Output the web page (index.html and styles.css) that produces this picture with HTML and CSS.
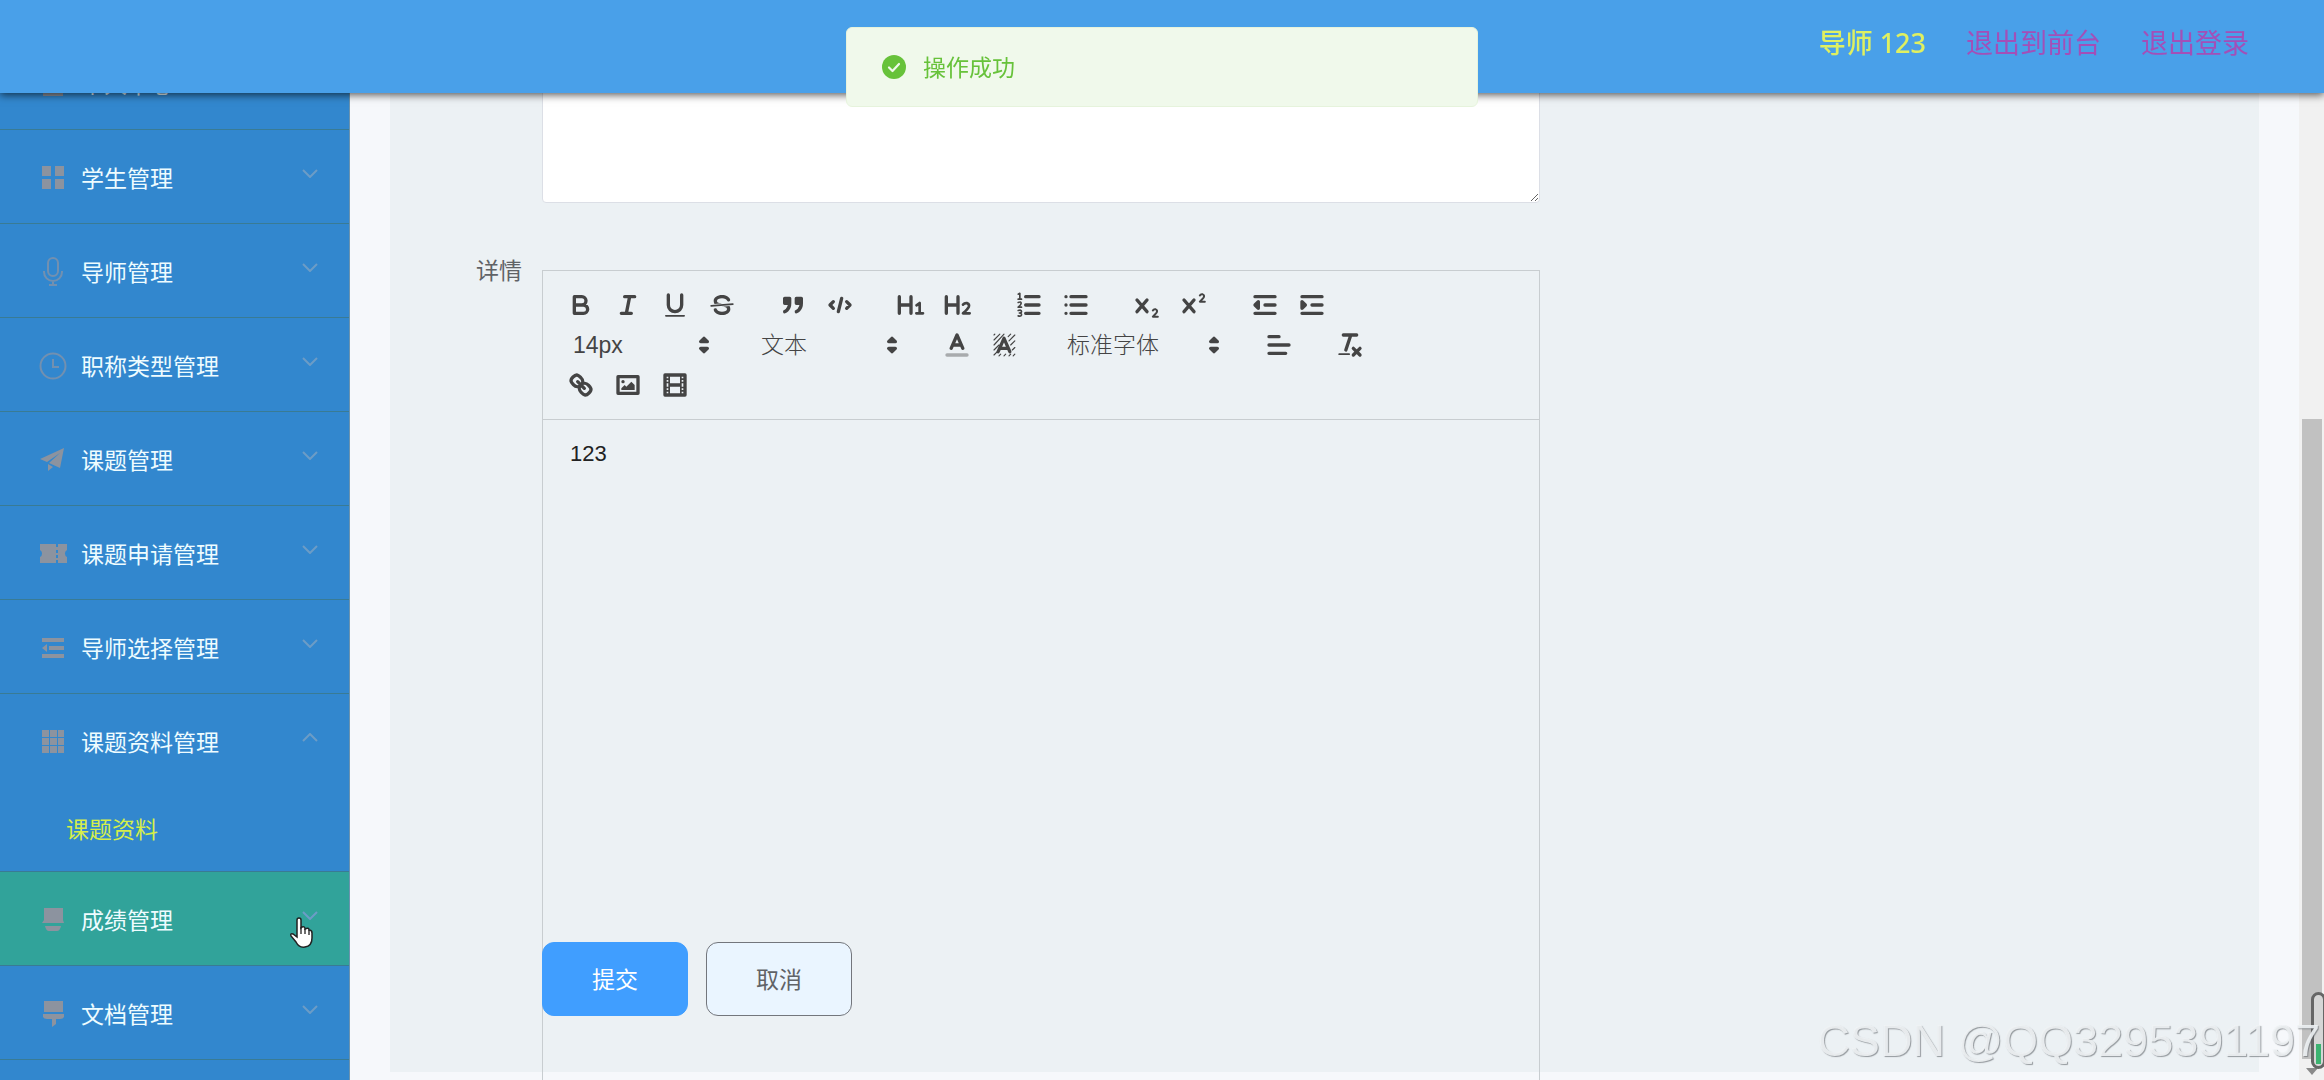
FILE: index.html
```html
<!DOCTYPE html>
<html lang="zh-CN">
<head>
<meta charset="utf-8">
<title>课题资料</title>
<link rel="stylesheet" href="styles.css">
</head>
<body>
<header class="topbar">
  <span class="user">导师 123</span>
  <a class="exit" href="#front">退出到前台</a>
  <a class="exit" href="#logout">退出登录</a>
</header>

<div class="toast" role="status">
  <svg class="toast-icon" viewBox="0 0 24 24"><circle cx="12" cy="12" r="12" fill="#67c23a"/><path d="M7 12.5l3.500 3.500 6.500-7" fill="none" stroke="#f0f9eb" stroke-width="2.200" stroke-linecap="round" stroke-linejoin="round"/></svg>
  <span>操作成功</span>
</div>

<div class="shell">
  <nav class="sidebar">
    <ul class="menu">
      <li><a class="item" href="#"><svg class="ico" viewBox="0 0 26 26"><path d="M3 6h20v19H3z"/></svg><span>个人中心</span></a></li>
      <li><a class="item" href="#"><svg class="ico" viewBox="0 0 26 26"><path d="M2 1h9v10H2zM15 1h9v10h-9zM2 14h9v10H2zM15 14h9v10h-9z"/></svg><span>学生管理</span><svg class="chev" viewBox="0 0 16 9"><path d="M1 1l7 7 7-7"/></svg></a></li>
      <li><a class="item" href="#"><svg class="ico line" viewBox="0 0 26 26"><rect x="8" y="-1" width="10" height="18" rx="5"/><path d="M4 12v1a9 9 0 0 0 18 0v-1M13 22v4M9 26h8"/></svg><span>导师管理</span><svg class="chev" viewBox="0 0 16 9"><path d="M1 1l7 7 7-7"/></svg></a></li>
      <li><a class="item" href="#"><svg class="ico line" viewBox="0 0 26 26"><circle cx="13" cy="13" r="12.500"/><path d="M13 6v8h6"/></svg><span>职称类型管理</span><svg class="chev" viewBox="0 0 16 9"><path d="M1 1l7 7 7-7"/></svg></a></li>
      <li><a class="item" href="#"><svg class="ico" viewBox="0 0 26 26"><path d="M24 1L0 12l7 3L20 6 9 16l11 5zM8 17v7l5-4z"/></svg><span>课题管理</span><svg class="chev" viewBox="0 0 16 9"><path d="M1 1l7 7 7-7"/></svg></a></li>
      <li><a class="item" href="#"><svg class="ico" viewBox="0 0 26 26"><path d="M0 3h16v3h2V3h9v6a4 4 0 0 0 0 7v6h-9v-3h-2v3H0v-6a4 4 0 0 0 0-7zM16 9v3h2V9zM16 14v3h2v-3z" fill-rule="evenodd"/></svg><span>课题申请管理</span><svg class="chev" viewBox="0 0 16 9"><path d="M1 1l7 7 7-7"/></svg></a></li>
      <li><a class="item" href="#"><svg class="ico" viewBox="0 0 26 26"><path d="M2 3h22v4H2zM9 11h15v4H9zM2 19h22v4H2zM7 9v8l-5-4z"/></svg><span>导师选择管理</span><svg class="chev" viewBox="0 0 16 9"><path d="M1 1l7 7 7-7"/></svg></a></li>
      <li>
        <a class="item" href="#"><svg class="ico" viewBox="0 0 26 26"><path d="M2 1h7v7H2zM10 1h7v7h-7zM18 1h6v7h-6zM2 9h7v7H2zM10 9h7v7h-7zM18 9h6v7h-6zM2 17h7v7H2zM10 17h7v7h-7zM18 17h6v7h-6z"/></svg><span>课题资料管理</span><svg class="chev" viewBox="0 0 16 9"><path d="M1 8l7-7 7 7"/></svg></a>
        <a class="subitem" href="#">课题资料</a>
      </li>
      <li class="hover"><a class="item" href="#"><svg class="ico" viewBox="0 0 26 26"><path d="M4 1h19v12l1 3H2l2-3zM5 19h16q-1 5-4 5H9q-3 0-4-5z"/></svg><span>成绩管理</span><svg class="chev" viewBox="0 0 16 9"><path d="M1 1l7 7 7-7"/></svg></a>
        <svg class="pointer" viewBox="0 0 24 30"><path d="M8 2a2 2 0 0 1 4 0v8l1-1q3-1 3 2 4-2 4 1 3 0 3 3v5q0 8-7 9-6 1-9-5L2 18q-1-3 2-2l4 3z" fill="#fff" stroke="#222" stroke-width="1.500"/><path d="M12 9v7M16 11v5M20 12v5" stroke="#222" stroke-width="1.300"/></svg></li>
      <li><a class="item" href="#"><svg class="ico" viewBox="0 0 26 26"><path d="M4 0h19v11H4zM3 13h21v3q-1 2-4 2h-4v5l-4 3v-8H7q-3 0-4-2z"/></svg><span>文档管理</span><svg class="chev" viewBox="0 0 16 9"><path d="M1 1l7 7 7-7"/></svg></a></li>
      <li><a class="item" href="#"></a></li>
    </ul>
  </nav>

  <main class="main">
    <form class="card">
      <div class="row">
        <label class="label" for="intro"></label>
        <textarea class="textarea" id="intro"></textarea>
      </div>
      <div class="row editor-row">
        <span class="label" id="detail-label">详情</span>
        <div class="editor">
          <div class="toolbar">
            <div class="tools">
              <div class="group">
                <button type="button" class="tool" aria-label="加粗"><svg viewBox="0 0 18 18"><path d="M5 4h4.500a2.500 2.500 0 0 1 0 5H5zM5 9h5.500a2.500 2.500 0 0 1 0 5H5z"/></svg></button>
                <button type="button" class="tool" aria-label="斜体"><svg viewBox="0 0 18 18"><path d="M7 4h6M5 14h6M8 14l2-10"/></svg></button>
                <button type="button" class="tool" aria-label="下划线"><svg viewBox="0 0 18 18"><path d="M5 3v6a4 4 0 0 0 8 0V3"/><rect class="fill" x="3" y="15" width="12" height="1" rx=".5"/></svg></button>
                <button type="button" class="tool" aria-label="删除线"><svg viewBox="0 0 18 18"><path class="thin" d="M15.500 8.500l-13 1"/><path class="fill" d="M9 8C6.500 7.800 6 7.500 6 6.500 6 5.800 7.300 5 9 5c1.600 0 2.800.7 3 1.300a1 1 0 0 0 1.900-.6C13.400 4.100 11.400 3 9 3 6.200 3 4 4.500 4 6.500a3.200 3.200 0 0 0 .5 1.840zM9 10c2.500.2 3 .5 3 1.500 0 .7-1.300 1.500-3 1.500-1.600 0-2.800-.7-3-1.300a1 1 0 1 0-1.900.6C4.600 13.900 6.600 15 9 15c2.800 0 5-1.500 5-3.500a3.200 3.200 0 0 0-.5-1.840z"/></svg></button>
              </div>
              <div class="group">
                <button type="button" class="tool" aria-label="引用"><svg viewBox="0 0 18 18"><path class="both" d="M4 5h3v3H4zM11 5h3v3h-3zM7 8c0 4-3 5-3 5M14 8c0 4-3 5-3 5"/></svg></button>
                <button type="button" class="tool" aria-label="代码"><svg viewBox="0 0 18 18"><path d="M5 7L3 9l2 2M13 7l2 2-2 2M10 5L8 13"/></svg></button>
              </div>
              <div class="group">
                <button type="button" class="tool" aria-label="标题 1"><svg viewBox="0 0 18 18"><path d="M2 4v10M9 4v10M2 9h7"/><path class="mid" d="M12.300 9.200l1.900-1.400V14M12.200 14h4"/></svg></button>
                <button type="button" class="tool" aria-label="标题 2"><svg viewBox="0 0 18 18"><path d="M2 4v10M9 4v10M2 9h7"/><path class="mid" d="M12 8.800q1-1.200 2.500-.9 1.500.6 1 2.100-.5 1.200-3.500 4h4"/></svg></button>
              </div>
              <div class="group">
                <button type="button" class="tool" aria-label="有序列表"><svg viewBox="0 0 18 18"><path d="M7 4h8M7 9h8M7 14h8"/><path class="thin" d="M2.500 2.500l1-.5v3M2.500 5.500h2M2.500 7.500q1.800-.8 1.800.5 0 1-1.800 2.300h2M2.500 12.300q2-.6 2 .6 0 .9-1.300.9 1.500.2 1.300 1.200-.3 1-2 .5"/></svg></button>
                <button type="button" class="tool" aria-label="无序列表"><svg viewBox="0 0 18 18"><path d="M6 4h9M6 9h9M6 14h9M3 4h0M3 9h0M3 14h0"/></svg></button>
              </div>
              <div class="group">
                <button type="button" class="tool" aria-label="下标"><svg viewBox="0 0 18 18"><path d="M3 6l6 7M9 6l-6 7"/><path class="sub" d="M12.500 12.300q.6-1 1.700-.7 1.300.5.6 1.900-.5.8-2.300 2.500h3"/></svg></button>
                <button type="button" class="tool" aria-label="上标"><svg viewBox="0 0 18 18"><path d="M3 6l6 7M9 6l-6 7"/><path class="sub" d="M12.500 3.300q.6-1 1.700-.7 1.300.5.6 1.900-.5.8-2.300 2.500h3"/></svg></button>
              </div>
              <div class="group">
                <button type="button" class="tool" aria-label="减少缩进"><svg viewBox="0 0 18 18"><path d="M3 4h12M3 14h12M9 9h6"/><path class="both" d="M5 7v4L3 9z"/></svg></button>
                <button type="button" class="tool" aria-label="增加缩进"><svg viewBox="0 0 18 18"><path d="M3 4h12M3 14h12M9 9h6"/><path class="both" d="M3 7v4l2-2z"/></svg></button>
              </div>
            </div>
            <div class="tools">
              <div class="picker"><select aria-label="字号"><option>14px</option></select><svg viewBox="0 0 18 18"><path class="both" d="M7 11h4l-2 2zM7 7h4L9 5z"/></svg></div>
              <div class="picker"><select aria-label="段落格式"><option>文本</option></select><svg viewBox="0 0 18 18"><path class="both" d="M7 11h4l-2 2zM7 7h4L9 5z"/></svg></div>
              <div class="group">
                <button type="button" class="tool" aria-label="文字颜色"><svg viewBox="0 0 18 18"><path class="faint" d="M3 15h12"/><path d="M5.500 11L9 3l3.500 8M11.600 9H6.400"/></svg></button>
                <button type="button" class="tool" aria-label="背景颜色"><svg viewBox="0 0 18 18"><path class="hatch" d="M3 3l.5-.5M3 6l3.500-3.500M3 9l6-6.500M3 12l3-3M3 15l2-2M11.500 4l1.500-1.500M12 6.500l3.500-3.500M13 9l2.500-2.500M14 12l1.500-1.500M6 15.500l1-1M9 15.500l1-1M12 15.500l1-1M14.500 15.500l1-1"/><path d="M5.500 13L9 5l3.500 8M11.600 11H6.400"/></svg></button>
              </div>
              <div class="picker wide"><select aria-label="字体"><option>标准字体</option></select><svg viewBox="0 0 18 18"><path class="both" d="M7 11h4l-2 2zM7 7h4L9 5z"/></svg></div>
              <div class="group">
                <button type="button" class="tool" aria-label="对齐"><svg viewBox="0 0 18 18"><path d="M3 4h6M3 9h12M3 14h10"/></svg></button>
              </div>
              <div class="group">
                <button type="button" class="tool" aria-label="清除格式"><svg viewBox="0 0 18 18"><path d="M5 3h8M6.500 12l3-9M11 11l4 4M15 11l-4 4"/><rect class="fill" x="2" y="14" width="7" height="1" rx=".5"/></svg></button>
              </div>
            </div>
            <div class="tools">
              <div class="group">
                <button type="button" class="tool" aria-label="链接"><svg viewBox="0 0 18 18"><path d="M7 7l4 4M8.900 4.577a3.476 3.476 0 0 1 .36 4.679A3.476 3.476 0 0 1 4.577 8.900C3.185 7.500 2.035 6.400 4.217 4.217S7.500 3.185 8.900 4.577zM13.423 9.100a3.476 3.476 0 0 0-4.679-.36 3.476 3.476 0 0 0 .36 4.679c1.392 1.392 2.500 2.542 4.679.36S14.815 10.500 13.423 9.100z"/></svg></button>
                <button type="button" class="tool" aria-label="图片"><svg viewBox="0 0 18 18"><path d="M3 4h12v10H3z"/><path class="fill" d="M5 12v-1l2-2 1 1 3-3 2 2v3z"/><circle class="fill" cx="6" cy="7" r="1"/></svg></button>
                <button type="button" class="tool" aria-label="视频"><svg viewBox="0 0 18 18"><path d="M3 3h12v12H3z"/><path class="fill" d="M5 3h1v12H5zM12 3h1v12h-1zM5 8h8v2H5zM3 5h3v1H3zM3 7h3v1H3zM3 10h3v1H3zM3 12h3v1H3zM12 5h3v1h-3zM12 7h3v1h-3zM12 10h3v1h-3zM12 12h3v1h-3z"/></svg></button>
              </div>
            </div>
          </div>
          <div class="content" contenteditable="true" role="textbox" aria-labelledby="detail-label">123</div>
        </div>
      </div>
      <div class="actions">
        <button type="submit" class="btn primary">提交</button>
        <button type="button" class="btn">取消</button>
      </div>
    </form>
  </main>

  <div class="scrollbar" aria-hidden="true">
    <div class="thumb"></div>
    <svg class="down" viewBox="0 0 12 7"><path d="M0 0h12L6 7z"/></svg>
  </div>
</div>

<div class="meter" aria-hidden="true"><div class="level"></div></div>
<div class="watermark">CSDN @QQ3295391197</div>
</body>
</html>
```
FILE: styles.css
```css
* {
  box-sizing: border-box;
}

body {
  margin: 0;
  height: 100vh;
  overflow: hidden;
  background: #f6f8fb;
  font-family: "Noto Sans", "Noto Sans CJK SC", sans-serif;
  font-size: 23px;
  line-height: 32px;
  color: #606266;
}

a {
  text-decoration: none;
}

button,
select,
textarea {
  font: inherit;
  color: inherit;
}

/* top bar */
.topbar {
  position: fixed;
  inset: 0 0 auto 0;
  z-index: 10;
  display: flex;
  justify-content: flex-end;
  gap: 40px;
  height: 93px;
  padding: 24px 75px 0 0;
  background: #49a0e9;
  box-shadow: 0 2px 8px rgba(0, 0, 0, 0.65);
  font-size: 27px;
  line-height: 38px;
}

.user {
  color: #e0f060;
  font-weight: 500;
}

.exit {
  color: #a34fb8;
}

/* message */
.toast {
  position: fixed;
  top: 27px;
  left: 50%;
  z-index: 20;
  display: flex;
  align-items: center;
  gap: 17px;
  width: 632px;
  height: 80px;
  padding: 0 35px;
  border: 1px solid #e6f3dc;
  border-radius: 6px;
  background: #f0f9eb;
  color: #67c23a;
  transform: translateX(-50%);
}

.toast-icon {
  width: 24px;
  height: 24px;
}

/* layout */
.shell {
  display: flex;
  height: 100%;
  overflow: hidden;
}

.sidebar {
  flex: none;
  width: 350px;
  padding-top: 36px;
  border-right: 1px solid #6b93ae;
  background: #3287ce;
}

.menu {
  margin: 0;
  padding: 0;
  list-style: none;
}

.menu li {
  position: relative;
  border-bottom: 1px solid #397b94;
}

.menu .hover {
  background: #31a39a;
}

.item {
  display: flex;
  align-items: center;
  height: 93px;
  padding: 3px 31px 0 40px;
  color: #eefcff;
}

.ico {
  width: 26px;
  height: 26px;
  margin-right: 15px;
  overflow: visible;
  fill: #8c939f;
}

.ico.line {
  fill: none;
  stroke: #7290b0;
  stroke-width: 2;
}

.chev {
  width: 16px;
  height: 9px;
  margin: 0 0 10px auto;
  fill: none;
  stroke: #6c9cc6;
  stroke-width: 2;
}

.subitem {
  display: block;
  padding: 26px 0 26px 66px;
  color: #d5ee4a;
}

.pointer {
  position: absolute;
  right: 36px;
  top: 46px;
  width: 24px;
  height: 30px;
  overflow: visible;
  fill: none;
}

.main {
  flex: 1;
  min-width: 0;
  padding: 0 40px;
}

.card {
  padding: 60px 0 56px;
  background: #ecf1f4;
}

.row {
  display: grid;
  grid-template-columns: 152px minmax(0, 998px);
  align-items: start;
}

.label {
  padding-right: 20px;
  line-height: 0;
  text-align: right;
}

.textarea {
  height: 143px;
  padding: 8px 22px;
  border: 1px solid #dcdfe6;
  border-radius: 4px;
  background: #fff;
  resize: vertical;
}

/* rich text editor */
.editor-row {
  height: 672px;
  margin-top: 67px;
}

.editor {
  border: 1px solid #c8cdd0;
}

.toolbar {
  padding: 14px;
  border-bottom: 1px solid #c8cdd0;
  color: #444;
}

.tools {
  display: flex;
  gap: 24px;
  height: 40px;
}

.group {
  display: flex;
}

.tool {
  display: grid;
  place-items: center;
  width: 47px;
  height: 40px;
  padding: 0;
  border: 0;
  background: none;
}

.toolbar svg {
  width: 30px;
  height: 30px;
  fill: none;
  stroke: #444;
  stroke-width: 2;
  stroke-linecap: round;
  stroke-linejoin: round;
}

.toolbar .fill {
  fill: #444;
  stroke: none;
}

.toolbar .both {
  fill: #444;
}

.toolbar .thin {
  stroke-width: 1;
}

.toolbar .mid {
  stroke-width: 1.6;
}

.toolbar .sub {
  stroke-width: 1.2;
}

.toolbar .hatch {
  stroke-width: 0.7;
}

.toolbar .faint {
  opacity: 0.4;
}

.picker {
  display: grid;
  align-items: center;
  width: 164px;
}

.picker.wide {
  width: 180px;
}

.picker select,
.picker svg {
  grid-area: 1 / 1;
}

.picker select {
  width: 100%;
  height: 40px;
  padding: 0 0 0 16px;
  border: 0;
  background: none;
  appearance: none;
  font-family: "Liberation Sans", "Noto Sans CJK SC", sans-serif;
  font-weight: 300;
}

.picker svg {
  justify-self: end;
  margin-right: 2px;
  pointer-events: none;
}

.content {
  height: 800px;
  padding: 18px 27px;
  color: #222;
  font-family: "Liberation Sans", "Noto Sans CJK SC", sans-serif;
  font-size: 22px;
}

.actions {
  position: relative;
  display: flex;
  gap: 18px;
  padding-left: 152px;
}

.btn {
  width: 146px;
  height: 74px;
  border: 1px solid #73767c;
  border-radius: 12px;
  background: #eaf5ff;
}

.btn.primary {
  border-color: #409eff;
  background: #409eff;
  color: #fff;
}

/* scroll bar */
.scrollbar {
  display: flex;
  flex-direction: column;
  align-items: center;
  flex: none;
  width: 25px;
  padding: 419px 0 5px;
  background: #f1f1f1;
}

.thumb {
  flex: 1;
  width: 20px;
  background: #c1c1c1;
}

.down {
  width: 12px;
  height: 7px;
  margin-top: 9px;
  fill: #8a8a8a;
}

.meter {
  position: fixed;
  right: -2px;
  bottom: 11px;
  display: flex;
  align-items: flex-end;
  width: 15px;
  height: 77px;
  padding: 2px;
  border: 3px solid #666;
  border-radius: 8px;
  background: #d6d6d6;
}

.level {
  width: 5px;
  height: 20px;
  background: #3cb371;
}

.watermark {
  position: fixed;
  right: 4px;
  bottom: 13px;
  z-index: 5;
  color: rgba(240, 243, 245, 0.9);
  font-family: "Liberation Sans", sans-serif;
  font-size: 45px;
  line-height: 52px;
  text-shadow: 1px 1px 1px rgba(90, 95, 100, 0.6);
  white-space: nowrap;
  pointer-events: none;
}
```
